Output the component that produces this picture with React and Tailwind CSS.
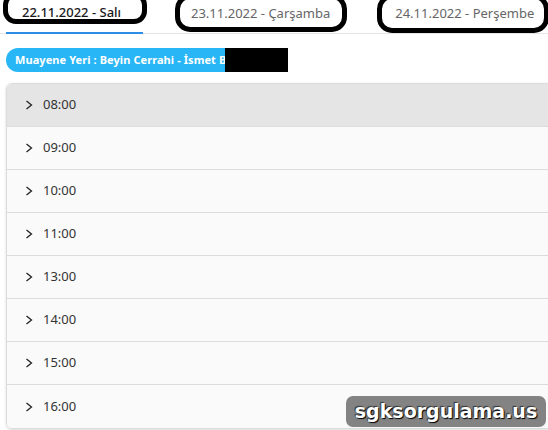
import React from "react";

const times = ["08:00", "09:00", "10:00", "11:00", "13:00", "14:00", "15:00", "16:00"];

function Chevron() {
  return (
    <svg width="8" height="10" viewBox="0 0 8 10" className="shrink-0">
      <polyline points="1.5,1 6.5,5 1.5,9" fill="none" stroke="#222" strokeWidth="1.3" />
    </svg>
  );
}

export default function App() {
  return (
    <div
      className="relative w-[548px] h-[430px] overflow-hidden bg-white"
      style={{ fontFamily: '"Noto Sans", "Open Sans", sans-serif' }}
    >
      {/* tabs */}
      <div className="relative h-[34px] border-b border-[#e5e5e5] flex items-start pl-[6px] text-[13px] whitespace-nowrap">
        <div className="w-[137px] h-[34px] pl-[16px] pt-[3px] border-b-2 border-[#2e8de6] font-medium text-[#1a1a1a]">
          22.11.2022 - Salı
        </div>
        <div className="pl-[48px] pt-[4px] text-[#666]">23.11.2022 - Çarşamba</div>
        <div className="pl-[65px] pt-[4px] text-[#666]">24.11.2022 - Perşembe</div>

        {/* hand drawn marks over the tabs */}
        <span className="absolute left-[3px] top-[-8px] w-[144px] h-[32px] border-[5px] border-black rounded-[13px]" />
        <span className="absolute left-[175px] top-[-6px] w-[172px] h-[38px] border-[5px] border-black rounded-[15px]" />
        <span className="absolute left-[377px] top-[-6px] w-[172px] h-[39px] border-[5px] border-black rounded-[15px]" />
      </div>

      {/* chip */}
      <div className="relative flex mt-[14px] ml-[6px] h-[24px]">
        <div className="flex items-center h-full pl-[9px] pr-[40px] rounded-full bg-[#29b6f6] text-white text-[11px] tracking-[0.08px] font-bold whitespace-nowrap">
          Muayene Yeri : Beyin Cerrahi - İsmet B
        </div>
        <span className="absolute left-[219px] top-0 w-[63px] h-full bg-black" />
      </div>

      {/* list */}
      <div className="mt-[11px] ml-[6px] w-[560px] border border-[#dcdcdc] rounded-md overflow-hidden shadow-[0_1px_3px_rgba(0,0,0,0.15)]">
        {times.map((t, i) => (
          <div
            key={t}
            className={`flex items-center gap-[10px] h-[43px] pl-[18px] text-[13px] text-[#333] ${
              i < times.length - 1 ? "border-b border-[#dcdcdc]" : ""
            } ${i === 0 ? "bg-[#e5e5e5]" : "bg-[#fafafa]"}`}
          >
            <Chevron />
            <span>{t}</span>
          </div>
        ))}
      </div>

      {/* watermark */}
      <div
        className="absolute left-[346px] top-[396px] w-[200px] h-[31px] rounded-[7px] bg-[#838383] flex items-center justify-center text-white font-bold text-[19px]"
        style={{ fontFamily: '"DejaVu Sans", sans-serif', textShadow: "1px 1px 1px #000, -1px -1px 1px #333" }}
      >
        sgksorgulama.us
      </div>
    </div>
  );
}
